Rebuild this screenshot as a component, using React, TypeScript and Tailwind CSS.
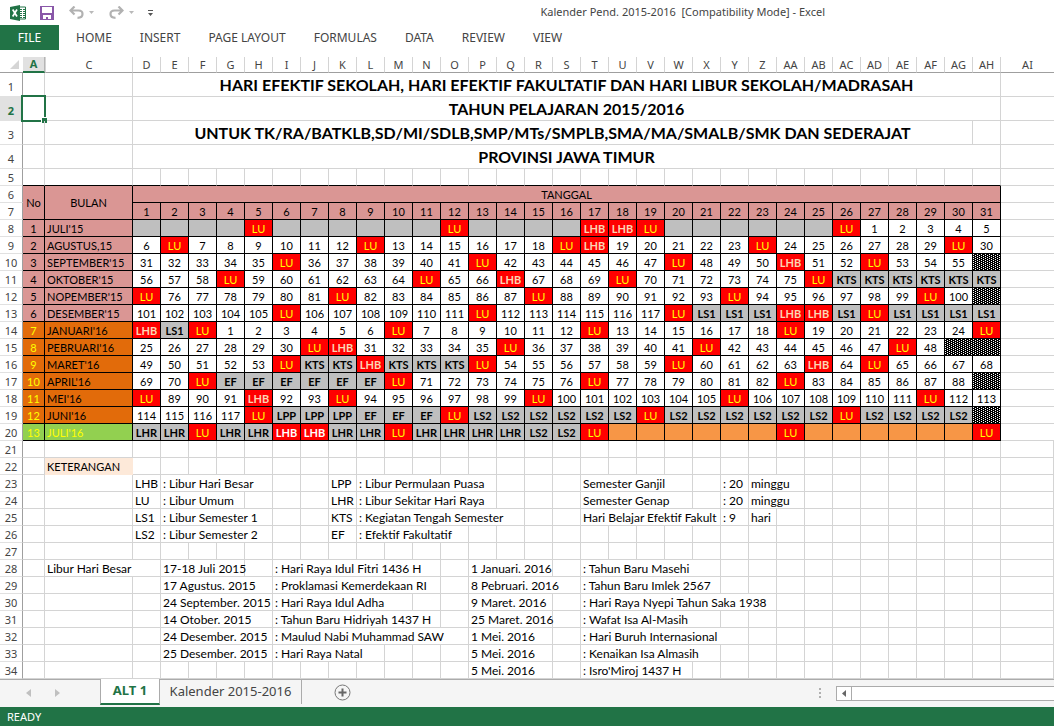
import type { ReactNode } from 'react';
import clsx from 'clsx';

const ribbonTabs = ['HOME', 'INSERT', 'PAGE LAYOUT', 'FORMULAS', 'DATA', 'REVIEW', 'VIEW'];

const columns = [
  'A', 'C', 'D', 'E', 'F', 'G', 'H', 'I', 'J', 'K', 'L', 'M', 'N', 'O', 'P', 'Q', 'R', 'S', 'T',
  'U', 'V', 'W', 'X', 'Y', 'Z', 'AA', 'AB', 'AC', 'AD', 'AE', 'AF', 'AG', 'AH', 'AI',
];

const dates = Array.from({ length: 31 }, (_, i) => i + 1);

// "." not a school day yet, "#" no such date, "o" next school year
const months = [
  { name: "JULI'15", days: '. . . . LU . . . . . . LU . . . . LHB LHB LU . . . . . . LU 1 2 3 4 5' },
  { name: 'AGUSTUS,15', days: '6 LU 7 8 9 10 11 12 LU 13 14 15 16 17 18 LU LHB 19 20 21 22 23 LU 24 25 26 27 28 29 LU 30' },
  { name: "SEPTEMBER'15", days: '31 32 33 34 35 LU 36 37 38 39 40 41 LU 42 43 44 45 46 47 LU 48 49 50 LHB 51 52 LU 53 54 55 #' },
  { name: "OKTOBER'15", days: '56 57 58 LU 59 60 61 62 63 64 LU 65 66 LHB 67 68 69 LU 70 71 72 73 74 75 LU KTS KTS KTS KTS KTS KTS' },
  { name: "NOPEMBER'15", days: 'LU 76 77 78 79 80 81 LU 82 83 84 85 86 87 LU 88 89 90 91 92 93 LU 94 95 96 97 98 99 LU 100 #' },
  { name: "DESEMBER'15", days: '101 102 103 104 105 LU 106 107 108 109 110 111 LU 112 113 114 115 116 117 LU LS1 LS1 LS1 LHB LHB LS1 LU LS1 LS1 LS1 LS1' },
  { name: "JANUARI'16", days: 'LHB LS1 LU 1 2 3 4 5 6 LU 7 8 9 10 11 12 LU 13 14 15 16 17 18 LU 19 20 21 22 23 24 LU' },
  { name: "PEBRUARI'16", days: '25 26 27 28 29 30 LU LHB 31 32 33 34 35 LU 36 37 38 39 40 41 LU 42 43 44 45 46 47 LU 48 # #' },
  { name: "MARET'16", days: '49 50 51 52 53 LU KTS KTS LHB KTS KTS KTS LU 54 55 56 57 58 59 LU 60 61 62 63 LHB 64 LU 65 66 67 68' },
  { name: "APRIL'16", days: '69 70 LU EF EF EF EF EF EF LU 71 72 73 74 75 76 LU 77 78 79 80 81 82 LU 83 84 85 86 87 88 #' },
  { name: "MEI'16", days: 'LU 89 90 91 LHB 92 93 LU 94 95 96 97 98 99 LU 100 101 102 103 104 105 LU 106 107 108 109 110 111 LU 112 113' },
  { name: "JUNI'16", days: '114 115 116 117 LU LPP LPP LPP EF EF EF LU LS2 LS2 LS2 LS2 LS2 LS2 LU LS2 LS2 LS2 LS2 LS2 LS2 LU LS2 LS2 LS2 LS2 #' },
  { name: "JULI'16", days: 'LHR LHR LU LHR LHR LHB LHB LHR LHR LU LHR LHR LHR LHR LS2 LS2 LU o o o o o o LU o o o o o o LU' },
];

// [column, span, text]
type Entry = [string, number, string];

const notes: { row: number; entries: Entry[] }[] = [
  { row: 21, entries: [] },
  { row: 22, entries: [['C', 1, 'KETERANGAN']] },
  { row: 23, entries: [['D', 1, 'LHB'], ['E', 4, ': Libur Hari Besar'], ['K', 1, 'LPP'], ['L', 5, ': Libur Permulaan Puasa'], ['T', 4, 'Semester Ganjil'], ['Y', 1, ': 20'], ['Z', 2, 'minggu']] },
  { row: 24, entries: [['D', 1, 'LU'], ['E', 3, ': Libur Umum'], ['K', 1, 'LHR'], ['L', 5, ': Libur Sekitar Hari Raya'], ['T', 4, 'Semester Genap'], ['Y', 1, ': 20'], ['Z', 2, 'minggu']] },
  { row: 25, entries: [['D', 1, 'LS1'], ['E', 4, ': Libur Semester 1'], ['K', 1, 'KTS'], ['L', 6, ': Kegiatan Tengah Semester'], ['T', 5, 'Hari Belajar Efektif Fakult'], ['Y', 1, ': 9'], ['Z', 1, 'hari']] },
  { row: 26, entries: [['D', 1, 'LS2'], ['E', 4, ': Libur Semester 2'], ['K', 1, 'EF'], ['L', 4, ': Efektif Fakultatif']] },
  { row: 27, entries: [] },
  { row: 28, entries: [['C', 2, 'Libur Hari Besar'], ['E', 3, '17-18 Juli 2015'], ['I', 6, ': Hari Raya Idul Fitri 1436 H'], ['P', 3, '1 Januari. 2016'], ['T', 5, ': Tahun Baru Masehi']] },
  { row: 29, entries: [['E', 4, '17 Agustus. 2015'], ['I', 6, ': Proklamasi Kemerdekaan RI'], ['P', 4, '8 Pebruari. 2016'], ['T', 5, ': Tahun Baru Imlek 2567']] },
  { row: 30, entries: [['E', 4, '24 September. 2015'], ['I', 5, ': Hari Raya Idul Adha'], ['P', 3, '9 Maret. 2016'], ['T', 7, ': Hari Raya Nyepi Tahun Saka 1938']] },
  { row: 31, entries: [['E', 4, '14 Otober. 2015'], ['I', 6, ': Tahun Baru Hidriyah 1437 H'], ['P', 3, '25 Maret. 2016'], ['T', 5, ': Wafat Isa Al-Masih']] },
  { row: 32, entries: [['E', 4, '24 Desember. 2015'], ['I', 7, ': Maulud Nabi Muhammad SAW'], ['P', 3, '1 Mei. 2016'], ['T', 6, ': Hari Buruh Internasional']] },
  { row: 33, entries: [['E', 4, '25 Desember. 2015'], ['I', 4, ': Hari Raya Natal'], ['P', 3, '5 Mei. 2016'], ['T', 5, ': Kenaikan Isa Almasih']] },
  { row: 34, entries: [['P', 3, '5 Mei. 2016'], ['T', 4, ": Isro'Miroj 1437 H"]] },
];

const gridLine = 'border-r border-b border-[#d4d4d4]';
const blackLine = 'border-r border-b border-black';
const centered = 'px-0 pt-0.5 pb-0 text-center';

function dayStyle(day: string, monthIndex: number) {
  if (day === 'LU') return 'bg-[#ff0000] text-[#ffff00]';
  if (day === 'LHB') return clsx('bg-[#ff0000] font-bold', monthIndex === 12 ? 'text-white' : 'text-[#fcd5b4]');
  if (day === '.') return 'bg-[#bfbfbf]';
  if (day === 'o') return 'bg-[#f79646]';
  if (day === '#') {
    return 'bg-black bg-[image:conic-gradient(at_1px_1px,transparent_75%,#fff_0),conic-gradient(at_1px_1px,transparent_75%,#fff_0)] bg-[size:4px_2px] bg-[position:0_0,2px_1px]';
  }
  if (/^\d/.test(day)) return 'bg-white';
  return 'bg-[#bfbfbf] font-bold';
}

function monthStyle(index: number) {
  if (index < 6) return 'bg-[#da9694]';
  if (index < 12) return 'bg-[#e26b0a]';
  return 'bg-[#92d050] text-[#ffff00]';
}

function RowHead({ n }: { n: number }) {
  return (
    <th
      scope="row"
      className={clsx(
        'border-r border-b border-r-[#9f9f9f] border-b-[#e1e1e1] px-0 pt-0.5 text-center align-bottom font-[Noto_Sans,sans-serif] text-[11px] leading-[14px]',
        n <= 4 ? 'pb-0.5' : 'pb-0',
        n === 2 ? 'bg-[#e1e1e1] font-bold text-[#217346]' : 'bg-white font-normal text-[#444444]',
      )}
    >
      {n}
    </th>
  );
}

function TitleRow({ n, text, span = 31, children }: { n: number; text: string; span?: number; children?: ReactNode }) {
  return (
    <tr className="h-6">
      <RowHead n={n} />
      <td className={clsx('relative p-0', gridLine)}>{children}</td>
      <td className={gridLine} />
      <td colSpan={span} className={clsx('p-0 text-center text-base leading-5 font-bold whitespace-nowrap', gridLine)}>
        {text}
      </td>
      {span < 31 && <td className={gridLine} />}
      <td className="border-b border-[#d4d4d4]" />
    </tr>
  );
}

function NoteRow({ row, entries }: { row: number; entries: Entry[] }) {
  const cells: ReactNode[] = [];
  let i = 0;
  while (i < columns.length) {
    const entry = entries.find(([column]) => column === columns[i]);
    const span = entry ? entry[1] : 1;
    cells.push(
      <td
        key={columns[i]}
        colSpan={span}
        className={clsx(
          'pt-0.5 pr-0 pb-0 pl-0.5 whitespace-nowrap',
          row === 22 && columns[i] === 'C' ? 'border-r border-b border-[#fde9d9] bg-[#fde9d9] text-[11px]' : gridLine,
        )}
      >
        {entry?.[2]}
      </td>,
    );
    i += span;
  }
  return (
    <tr className="h-[17px] text-xs leading-[14px]">
      <RowHead n={row} />
      {cells}
    </tr>
  );
}

function Sheet() {
  return (
    <table className="w-full table-fixed border-separate border-spacing-0 font-[Lato,sans-serif] text-[11px] leading-[14px] text-black">
      <colgroup>
        <col className="w-[23px]" />
        <col className="w-[22px]" />
        <col className="w-[88px]" />
        {dates.map((d) => (
          <col key={d} className="w-7" />
        ))}
        <col />
      </colgroup>
      <thead className="font-[Noto_Sans,sans-serif] text-[#444444]">
        <tr className="h-4">
          <td className="border-b border-[#9f9f9f] p-0">
            <svg className="mr-1 ml-auto block" width="9" height="9" viewBox="0 0 9 9">
              <path d="M9 0v9H0z" fill="#d5d5d5" />
            </svg>
          </td>
          {columns.map((column) => (
            <th
              key={column}
              scope="col"
              className={clsx(
                'p-0',
                column === 'A'
                  ? 'border-r border-b-2 border-r-[#b5b5b5] border-b-[#217346] bg-[#e1e1e1] font-bold text-[#217346]'
                  : 'border-r border-b border-r-[#d4d4d4] border-b-[#9f9f9f] font-normal',
                column === 'C' && 'border-l border-l-[#d4d4d4]',
                column === 'AI' && 'border-r-0',
              )}
            >
              {column}
            </th>
          ))}
        </tr>
      </thead>
      <tbody>
        <TitleRow n={1} text="HARI EFEKTIF SEKOLAH, HARI EFEKTIF FAKULTATIF DAN HARI LIBUR SEKOLAH/MADRASAH" />
        <TitleRow n={2} text="TAHUN PELAJARAN 2015/2016">
          <div className="absolute -inset-0.5 border-2 border-[#217346]">
            <span className="absolute -right-[3px] -bottom-[3px] size-1.5 border-t border-l border-white bg-[#217346]" />
          </div>
        </TitleRow>
        <TitleRow n={3} text="UNTUK TK/RA/BATKLB,SD/MI/SDLB,SMP/MTs/SMPLB,SMA/MA/SMALB/SMK DAN SEDERAJAT" span={30} />
        <TitleRow n={4} text="PROVINSI JAWA TIMUR" />
        <tr className="h-[17px]">
          <RowHead n={5} />
          {columns.map((column) => (
            <td
              key={column}
              className={clsx('border-r border-b border-r-[#d4d4d4] p-0', column === 'AI' ? 'border-r-0 border-b-[#d4d4d4]' : 'border-b-black')}
            />
          ))}
        </tr>
        <tr className="h-[17px] bg-[#da9694]">
          <RowHead n={6} />
          <td rowSpan={2} className={clsx('p-0 text-center', blackLine)}>No</td>
          <td rowSpan={2} className={clsx('p-0 text-center', blackLine)}>BULAN</td>
          <td colSpan={31} className={clsx(centered, blackLine)}>TANGGAL</td>
          <td className="border-b border-[#d4d4d4] bg-white" />
        </tr>
        <tr className="h-[17px] bg-[#da9694]">
          <RowHead n={7} />
          {dates.map((d) => (
            <td key={d} className={clsx(centered, blackLine)}>{d}</td>
          ))}
          <td className="border-b border-[#d4d4d4] bg-white" />
        </tr>
        {months.map((month, index) => (
          <tr key={month.name} className="h-[17px]">
            <RowHead n={index + 8} />
            <td className={clsx(centered, blackLine, monthStyle(index), index >= 6 && 'text-[#ffff00]')}>{index + 1}</td>
            <td className={clsx('pt-0.5 pr-0 pb-0 pl-0.5', blackLine, monthStyle(index))}>{month.name}</td>
            {month.days.split(' ').map((day, i) => (
              <td key={i} className={clsx(centered, blackLine, dayStyle(day, index))}>
                {/[A-Z\d]/.test(day) ? day : null}
              </td>
            ))}
            <td className="border-b border-[#d4d4d4]" />
          </tr>
        ))}
        {notes.map((note) => (
          <NoteRow key={note.row} row={note.row} entries={note.entries} />
        ))}
      </tbody>
    </table>
  );
}

function QuickAccess() {
  return (
    <div className="flex items-center">
      <svg width="16" height="16" viewBox="0 0 16 16" aria-label="Excel">
        <path d="M8 2h7.5v12H8z" fill="#fff" stroke="#217346" />
        <path d="M10 4.5h2M13 4.5h2M10 6.5h2M13 6.5h2M10 8.5h2M13 8.5h2M10 10.5h2M13 10.5h2M10 12.5h2M13 12.5h2" stroke="#217346" />
        <path d="M0 2l10-2v16L0 14z" fill="#217346" />
        <path d="M2.700 4.500l4.300 7M7 4.500l-4.300 7" stroke="#fff" strokeWidth="1.700" />
      </svg>
      <button aria-label="Save" className="ml-3.5">
        <svg width="14" height="14" viewBox="0 0 14 14">
          <path d="M0 0h14v14H0z" fill="#8957a8" />
          <path d="M2 1h10v6H2zM3 9h8v4H8v-2H6v2H3z" fill="#fff" />
        </svg>
      </button>
      <button aria-label="Undo" className="ml-[15px] flex items-center gap-[5px]">
        <svg width="15" height="13" viewBox="0 0 15 13">
          <path d="M5.500 .5L1.500 4.500l4 4M2 4.500h7.500c2.500 0 4 1.500 4 3.500S12 11.800 8.500 11.800" fill="none" stroke="#b1b1b1" strokeWidth="2.200" />
        </svg>
        <svg width="5" height="3" viewBox="0 0 5 3">
          <path d="M0 0h5L2.500 3z" fill="#b9b9b9" />
        </svg>
      </button>
      <button aria-label="Redo" className="ml-[15px] flex items-center gap-[5px]">
        <svg width="15" height="13" viewBox="0 0 15 13">
          <path d="M9.500 .5l4 4-4 4M13 4.500H5.500C3 4.500 1.500 6 1.500 8S3 11.800 6.500 11.800" fill="none" stroke="#b1b1b1" strokeWidth="2.200" />
        </svg>
        <svg width="5" height="3" viewBox="0 0 5 3">
          <path d="M0 0h5L2.500 3z" fill="#b9b9b9" />
        </svg>
      </button>
      <button aria-label="Customize Quick Access Toolbar" className="ml-3.5">
        <svg width="5" height="6" viewBox="0 0 5 6">
          <path d="M0 0h5v1H0zM0 3h5L2.500 6z" fill="#555" />
        </svg>
      </button>
    </div>
  );
}

function SheetTabs() {
  return (
    <footer>
      <div className="flex h-7 items-start border-t border-[#ababab] bg-[#f5f5f5] text-[13px] text-[#444444]">
        <div className="flex h-[26px] w-[100px] items-center gap-6 pl-[26px]">
          <button aria-label="Previous sheet">
            <svg width="5" height="8" viewBox="0 0 5 8">
              <path d="M5 0v8L0 4z" fill="#c0c0c0" />
            </svg>
          </button>
          <button aria-label="Next sheet">
            <svg width="5" height="8" viewBox="0 0 5 8">
              <path d="M0 0v8l5-4z" fill="#c0c0c0" />
            </svg>
          </button>
        </div>
        <button className="-mt-px h-[26px] w-[60px] border-x border-b-2 border-x-[#ababab] border-b-[#217346] bg-white font-bold text-[#217346]">
          ALT 1
        </button>
        <button className="h-6 w-[142px] border-r border-[#ababab] whitespace-nowrap">Kalender 2015-2016</button>
        <button aria-label="New sheet" className="mt-1 ml-8">
          <svg width="17" height="17" viewBox="0 0 17 17">
            <circle cx="8.500" cy="8.500" r="7.500" fill="none" stroke="#777" />
            <path d="M4.500 8.500h8M8.500 4.500v8" stroke="#666" strokeWidth="2" />
          </svg>
        </button>
        <div className="ml-auto flex pt-1.5">
          <svg className="mt-0.5 mr-[15px]" width="2" height="11" viewBox="0 0 2 11">
            <path d="M0 0h2v2H0zM0 4h2v2H0zM0 8h2v2H0z" fill="#b0b0b0" />
          </svg>
          <button aria-label="Scroll left" className="flex h-[15px] w-4 items-center justify-center border border-[#ababab] bg-white">
            <svg width="4" height="7" viewBox="0 0 4 7">
              <path d="M4 0v7L0 3.500z" fill="#666" />
            </svg>
          </button>
          <div className="h-[15px] w-[202px] border-y border-[#ababab] bg-white" />
        </div>
      </div>
      <div className="flex h-5 items-center bg-[#217346] pl-[7px] text-[11px] text-white">READY</div>
    </footer>
  );
}

export default function App() {
  return (
    <div className="flex min-h-screen flex-col overflow-hidden bg-white font-[Noto_Sans,sans-serif]">
      <header className="pb-[7px] text-[#444444]">
        <div className="flex h-[25px] items-center justify-between pl-2.5">
          <QuickAccess />
          <h1 className="pr-[229px] text-[11px] whitespace-pre">Kalender Pend. 2015-2016  [Compatibility Mode] - Excel</h1>
        </div>
        <nav className="flex h-[25px] items-stretch text-xs">
          <button className="w-[59px] bg-[#217346] text-white">FILE</button>
          <div className="flex gap-7 pl-[17px]">
            {ribbonTabs.map((tab) => (
              <button key={tab}>{tab}</button>
            ))}
          </div>
        </nav>
      </header>
      <main className="flex-1">
        <Sheet />
      </main>
      <SheetTabs />
    </div>
  );
}
